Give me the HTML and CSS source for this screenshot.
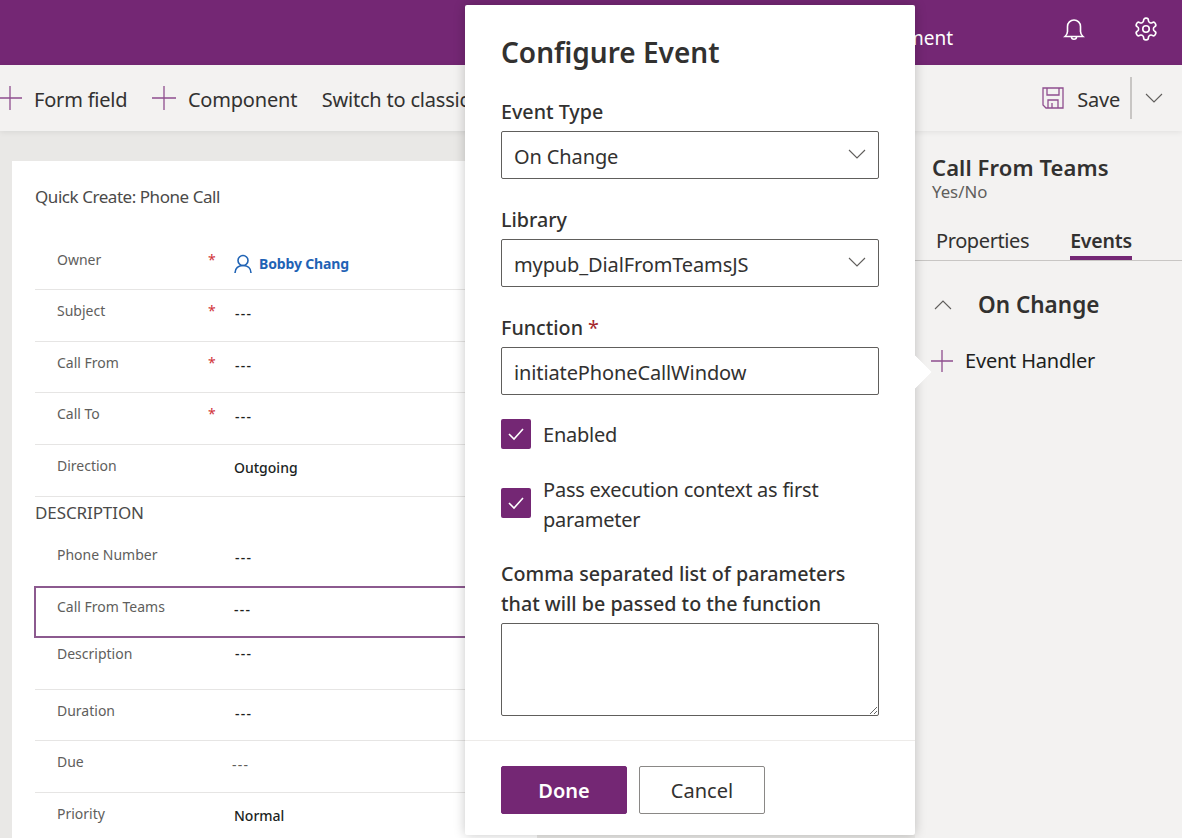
FILE: index.html
```html
<!DOCTYPE html>
<html lang="en">
<head>
    <meta charset="UTF-8">
    <title>Configure Event</title>
    <link rel="stylesheet" href="styles.css">
</head>
<body>
    <div class="page">
        <header class="topbar">
            <span class="env-name">Environment</span>
            <svg class="top-icon bell" width="22" height="24" viewBox="0 0 22 24" fill="none" stroke="#fff" stroke-width="1.6">
                <path d="M2 19.5h18c-1.6-1.4-2.5-2.6-2.5-5V9.500a6.500 6.500 0 0 0-13 0v5c0 2.400-.9 3.600-2.500 5z"/>
                <path d="M8.500 20c0 3 5 3 5 0"/>
            </svg>
            <svg class="top-icon gear" width="26" height="26" viewBox="0 0 24 24" fill="none" stroke="#fff" stroke-width="1.500">
                <path d="M12.220 2h-.44a2 2 0 0 0-2 2v.18a2 2 0 0 1-1 1.730l-.43.25a2 2 0 0 1-2 0l-.15-.08a2 2 0 0 0-2.730.73l-.22.38a2 2 0 0 0 .73 2.730l.15.1a2 2 0 0 1 1 1.720v.51a2 2 0 0 1-1 1.740l-.15.09a2 2 0 0 0-.73 2.730l.22.38a2 2 0 0 0 2.730.73l.15-.08a2 2 0 0 1 2 0l.43.25a2 2 0 0 1 1 1.730V20a2 2 0 0 0 2 2h.44a2 2 0 0 0 2-2v-.18a2 2 0 0 1 1-1.730l.43-.25a2 2 0 0 1 2 0l.15.08a2 2 0 0 0 2.730-.73l.22-.39a2 2 0 0 0-.73-2.730l-.15-.08a2 2 0 0 1-1-1.740v-.5a2 2 0 0 1 1-1.740l.15-.09a2 2 0 0 0 .73-2.730l-.22-.38a2 2 0 0 0-2.730-.73l-.15.08a2 2 0 0 1-2 0l-.43-.25a2 2 0 0 1-1-1.730V4a2 2 0 0 0-2-2z"/>
                <circle cx="12" cy="12" r="3"/>
            </svg>
        </header>

        <div class="cmdbar">
            <div class="cmd cmd-first">
                <svg class="plus" width="24" height="24" viewBox="0 0 24 24"><path d="M12 0v24M0 12h24"/></svg>
                <span>Form field</span>
            </div>
            <div class="cmd">
                <svg class="plus" width="24" height="24" viewBox="0 0 24 24"><path d="M12 0v24M0 12h24"/></svg>
                <span>Component</span>
            </div>
            <div class="cmd">
                <span>Switch to classic</span>
            </div>
            <div class="cmd cmd-save">
                <svg width="22" height="22" viewBox="0 0 22 22" fill="none" stroke="#8f4e8f" stroke-width="1.300">
                    <path d="M1 1h20v20H4l-3-3z"/>
                    <path d="M5 1v7h12V1M6 21v-8h10v8M10 16v5"/>
                </svg>
                <span>Save</span>
            </div>
            <div class="cmd-split"></div>
            <svg class="chev chev-save" width="18" height="10" viewBox="0 0 18 10"><path d="M1 1l8 8 8-8"/></svg>
        </div>

        <div class="workspace">
            <div class="form-area">
                <div class="form-card">
                    <div class="form-title">Quick Create: Phone Call</div>
                    <div class="row"><span class="row-label">Owner</span><span class="req">*</span>
                        <span class="row-value owner">
                            <svg width="18" height="20" viewBox="0 0 18 20" fill="none" stroke="#1f63b5" stroke-width="1.600"><circle cx="9" cy="6.500" r="5"/><path d="M1 19c0-5 3.500-7.500 8-7.500s8 2.500 8 7.500"/></svg>
                            <b>Bobby Chang</b>
                        </span>
                    </div>
                    <div class="row"><span class="row-label">Subject</span><span class="req">*</span><span class="row-value dash">---</span></div>
                    <div class="row"><span class="row-label">Call From</span><span class="req">*</span><span class="row-value dash">---</span></div>
                    <div class="row"><span class="row-label">Call To</span><span class="req">*</span><span class="row-value dash">---</span></div>
                    <div class="row"><span class="row-label">Direction</span><span class="req"></span><span class="row-value row-value-text">Outgoing</span></div>
                    <div class="section-name">DESCRIPTION</div>
                    <div class="row row-phone"><span class="row-label">Phone Number</span><span class="req"></span><span class="row-value dash">---</span></div>
                    <div class="row row-selected"><span class="row-label">Call From Teams</span><span class="req"></span><span class="row-value dash">---</span></div>
                    <div class="row row-tall"><span class="row-label">Description</span><span class="req"></span><span class="row-value dash">---</span></div>
                    <div class="row"><span class="row-label">Duration</span><span class="req"></span><span class="row-value dash">---</span></div>
                    <div class="row"><span class="row-label">Due</span><span class="req"></span><span class="row-value dash row-value-light">---</span></div>
                    <div class="row row-last"><span class="row-label">Priority</span><span class="req"></span><span class="row-value row-value-text">Normal</span></div>
                </div>
            </div>

            <aside class="side-panel">
                <div class="side-title">Call From Teams</div>
                <div class="side-type">Yes/No</div>
                <div class="tabs">
                    <span class="tab">Properties</span>
                    <span class="tab tab-active">Events</span>
                </div>
                <div class="event-group">
                    <svg class="chev" width="18" height="10" viewBox="0 0 18 10"><path d="M1 9l8-8 8 8"/></svg>
                    <span>On Change</span>
                </div>
                <div class="event-add">
                    <svg class="plus" width="22" height="22" viewBox="0 0 22 22"><path d="M11 0v22M0 11h22"/></svg>
                    <span>Event Handler</span>
                </div>
            </aside>
        </div>

        <div class="modal">
            <div class="modal-arrow"></div>
            <div class="modal-body">
                <h1 class="modal-title">Configure Event</h1>
                <div class="field-label">Event Type</div>
                <div class="select">
                    <span>On Change</span>
                    <svg class="chev" width="18" height="10" viewBox="0 0 18 10"><path d="M1 1l8 8 8-8"/></svg>
                </div>
                <div class="field-label">Library</div>
                <div class="select">
                    <span>mypub_DialFromTeamsJS</span>
                    <svg class="chev" width="18" height="10" viewBox="0 0 18 10"><path d="M1 1l8 8 8-8"/></svg>
                </div>
                <div class="field-label">Function <span class="field-req">*</span></div>
                <input class="text-input" type="text" value="initiatePhoneCallWindow">
                <div class="check-row check-one">
                    <span class="checkbox"><svg width="18" height="14" viewBox="0 0 18 14" fill="none" stroke="#fff" stroke-width="1.600"><path d="M2 7l5 5L16 2"/></svg></span>
                    <span class="check-text">Enabled</span>
                </div>
                <div class="check-row check-two">
                    <span class="checkbox"><svg width="18" height="14" viewBox="0 0 18 14" fill="none" stroke="#fff" stroke-width="1.600"><path d="M2 7l5 5L16 2"/></svg></span>
                    <span>Pass execution context as first parameter</span>
                </div>
                <div class="field-label params-label">Comma separated list of parameters that will be passed to the function</div>
                <textarea class="params"></textarea>
            </div>
            <div class="modal-footer">
                <button class="btn btn-primary">Done</button>
                <button class="btn">Cancel</button>
            </div>
        </div>
    </div>
</body>
</html>
```

FILE: styles.css
```css
/* page */
* {
    box-sizing: border-box;
}

body {
    margin: 0;
    font-family: "Noto Sans", "Open Sans", sans-serif;
    color: #323130;
}

.page {
    position: relative;
    width: 1182px;
    height: 838px;
    overflow: hidden;
    display: flex;
    flex-direction: column;
    background: #e9e8e6;
}

/* top bar */
.topbar {
    height: 65px;
    flex: none;
    background: #742774;
    color: #fff;
    display: flex;
    align-items: center;
    justify-content: flex-end;
    padding-right: 23px;
}

.env-name {
    font-size: 19px;
    margin-right: 110px;
    padding-top: 10px;
}

.bell {
    margin-right: 48px;
    margin-top: -8px;
}

.gear {
    margin-top: -8px;
}

/* command bar */
.cmdbar {
    height: 66px;
    flex: none;
    background: #f3f2f1;
    box-shadow: 0 1px 6px rgba(0, 0, 0, 0.08);
    display: flex;
    align-items: center;
    font-size: 20px;
    letter-spacing: -0.2px;
    position: relative;
}

.cmd {
    display: flex;
    align-items: center;
    gap: 12px;
    margin-left: 24.5px;
    white-space: nowrap;
}

.cmd span {
    padding-top: 2px;
}

.cmd-first {
    margin-left: -2px;
}

.cmd-save {
    margin-left: auto;
    gap: 13px;
}

.cmd-split {
    width: 2px;
    height: 42px;
    background: #c8c6c4;
    margin: 0 13px 0 10px;
}

.chev-save {
    margin-right: 19px;
}

.plus path {
    stroke: #8f4e8f;
    stroke-width: 1.3;
    fill: none;
}

.chev {
    flex: none;
}

.chev path {
    stroke: #605e5c;
    stroke-width: 1.1;
    fill: none;
}

/* form */
.workspace {
    flex: 1;
    display: flex;
    min-height: 0;
}

.form-area {
    flex: 1;
    padding: 30px 378px 0 12px;
}

.form-card {
    background: #fff;
    height: 100%;
    padding: 0 0 0 23px;
    font-size: 14px;
}

.form-title {
    font-size: 17px;
    letter-spacing: -0.45px;
    height: 77.6px;
    padding-top: 24px;
    color: #4b4a49;
}

.row {
    display: flex;
    height: 51.6px;
    padding-top: 11px;
    border-bottom: 1px solid #e6e5e4;
    color: #605e5c;
}

.row-label {
    width: 151px;
    margin-left: 22px;
}

.req {
    width: 26px;
    color: #d13438;
}

.row-value {
    color: #201f1e;
    font-weight: 500;
    padding-top: 3px;
}

.row-value-text {
    padding-top: 2px;
}

.dash {
    letter-spacing: 1.2px;
    margin-left: 1px;
}

.row-value-light {
    margin-left: -2px;
    font-weight: 400;
    color: #605e5c;
}

.owner {
    display: flex;
    align-items: center;
    gap: 7px;
    height: 20px;
    padding-top: 4px;
    margin-top: 2px;
}

.owner b {
    color: #1f63b5;
    font-weight: 700;
    letter-spacing: -0.15px;
}

.section-name {
    font-size: 17px;
    height: 33.4px;
    padding-top: 4px;
    color: #4b4a49;
    letter-spacing: -0.1px;
}

.row-phone {
    border-bottom: none;
    height: 56px;
    padding-top: 15px;
}

.row-selected {
    border: 2px solid #8c5a8f;
    border-right: none;
    margin-left: -1px;
    height: 52px;
    padding-top: 9px;
}

.row-selected .row-label {
    margin-left: 21px;
}

.row-selected .dash {
    margin-left: 0;
}

.row-tall {
    padding-top: 6px;
}

.row-tall .row-value {
    padding-top: 0;
}

.row-last {
    border-bottom: none;
}

/* right panel */
.side-panel {
    width: 267px;
    flex: none;
    background: #f3f2f1;
    padding-top: 22px;
    color: #323130;
}

.side-title {
    font-size: 22px;
    font-weight: 600;
    letter-spacing: 0.1px;
    padding-left: 17px;
    line-height: 28px;
}

.side-type {
    font-size: 16.8px;
    color: #605e5c;
    padding-left: 17px;
    line-height: 22px;
}

.tabs {
    display: flex;
    gap: 41px;
    height: 36px;
    margin-top: 22px;
    padding: 0 0 0 21px;
    border-bottom: 1px solid #c8c6c4;
    font-size: 20px;
    line-height: 32px;
    letter-spacing: -0.4px;
}

.tab-active {
    font-size: 19.5px;
    font-weight: 600;
    letter-spacing: -0.2px;
    border-bottom: 4px solid #742774;
    height: 35px;
}

.event-group {
    display: flex;
    align-items: center;
    gap: 26px;
    margin: 28px 0 0 19px;
    font-size: 22.5px;
    font-weight: 600;
}

.event-add {
    display: flex;
    align-items: center;
    gap: 12px;
    margin: 27px 0 0 16px;
    font-size: 20px;
    letter-spacing: -0.2px;
    color: #201f1e;
}

/* modal */
.modal {
    position: absolute;
    left: 465px;
    top: 5px;
    width: 450px;
    height: 830px;
    background: #fff;
    border-radius: 2px;
    box-shadow: 0 0 12px rgba(0, 0, 0, 0.22);
    display: flex;
    flex-direction: column;
    justify-content: space-between;
}

.modal-arrow {
    position: absolute;
    left: 438px;
    top: 355px;
    width: 24px;
    height: 24px;
    background: #fff;
    transform: rotate(45deg);
    clip-path: polygon(0 0, 100% 0, 100% 100%);
}

.modal-body {
    padding: 0 36px;
}

.modal-title {
    margin: 0;
    font-size: 28px;
    font-weight: 600;
    line-height: 38px;
    padding-top: 28px;
    height: 94px;
}

.field-label {
    font-size: 19.7px;
    font-weight: 500;
    line-height: 26px;
    height: 32px;
}

.field-req {
    color: #a4262c;
    font-weight: 400;
}

.select,
.text-input {
    display: flex;
    align-items: center;
    justify-content: space-between;
    width: 378px;
    height: 48px;
    border: 1px solid #605e5c;
    border-radius: 2px;
    padding: 2px 12px 0;
    font-family: inherit;
    font-size: 20px;
    letter-spacing: -0.12px;
    color: #323130;
    background: #fff;
    margin-bottom: 28px;
}

.select .chev {
    position: relative;
    top: -2px;
}

.text-input {
    margin-bottom: 0;
}

.check-row {
    display: flex;
    align-items: center;
    gap: 12px;
    font-size: 20px;
    letter-spacing: -0.22px;
    line-height: 30px;
}

.check-one {
    height: 30px;
    margin-top: 24px;
}

.check-text {
    padding-top: 2px;
}

.check-two {
    margin-top: 26px;
}

.check-two .checkbox {
    margin-top: -4px;
}

.checkbox {
    width: 30px;
    height: 30px;
    flex: none;
    background: #742774;
    border-radius: 2px;
    display: flex;
    align-items: center;
    justify-content: center;
}

.params-label {
    line-height: 30px;
    height: 60px;
    margin-top: 24px;
    max-width: 360px;
}

.params {
    display: block;
    width: 378px;
    height: 93px;
    margin-top: 4px;
    border: 1px solid #605e5c;
    border-radius: 2px;
}

.modal-footer {
    border-top: 1px solid #edebe9;
    height: 95px;
    padding: 25px 36px 0;
    display: flex;
    gap: 12px;
}

.btn {
    width: 126px;
    height: 48px;
    border: 1px solid #8a8886;
    border-radius: 2px;
    background: #fff;
    font-family: inherit;
    font-size: 20px;
    color: #323130;
}

.btn-primary {
    background: #742774;
    border-color: #742774;
    color: #fff;
    font-weight: 600;
}
```
